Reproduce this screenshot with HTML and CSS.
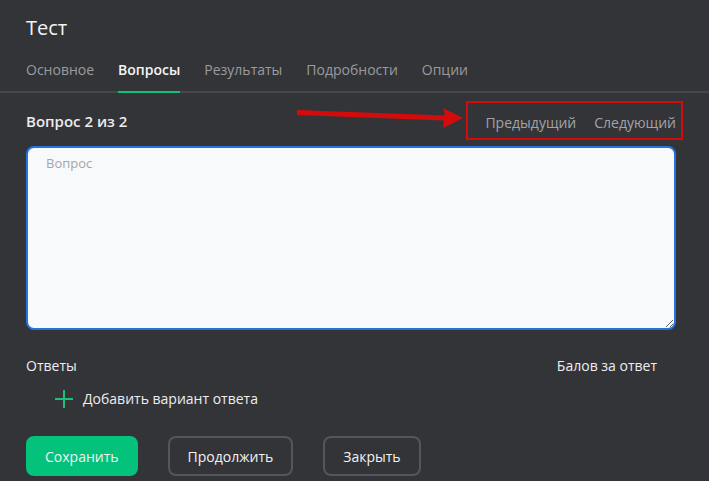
FILE: index.html
```html
<!DOCTYPE html>
<html lang="ru">
<head>
    <meta charset="UTF-8">
    <title>Тест</title>
    <link rel="stylesheet" href="styles.css">
</head>
<body>

<div class="dialog">
    <!-- Header -->
    <h1 class="title">Тест</h1>
    <div class="tabs">
        <span class="tab">Основное</span>
        <span class="tab active">Вопросы</span>
        <span class="tab">Результаты</span>
        <span class="tab">Подробности</span>
        <span class="tab">Опции</span>
    </div>

    <!-- Question -->
    <div class="question-head">
        <span class="question-num">Вопрос 2 из 2</span>
        <div class="nav">
            <svg class="arrow" width="170" height="24" viewBox="0 0 170 24">
                <polygon points="0,3 148,8.5 146,1 166,11 146,21 147,13.5 0,8" fill="#d40b0b"/>
            </svg>
            <div class="nav-box">
                <span>Предыдущий</span>
                <span>Следующий</span>
            </div>
        </div>
    </div>
    <textarea class="question-text" placeholder="Вопрос" autofocus></textarea>

    <!-- Answers -->
    <div class="answers-head">
        <span>Ответы</span>
        <span>Балов за ответ</span>
    </div>
    <div class="add-answer">
        <svg width="18" height="18" viewBox="0 0 18 18">
            <path d="M9 0v18M0 9h18" stroke="#1cc07a" stroke-width="2"/>
        </svg>
        <span>Добавить вариант ответа</span>
    </div>

    <!-- Buttons -->
    <div class="buttons">
        <button class="btn btn-primary">Сохранить</button>
        <button class="btn">Продолжить</button>
        <button class="btn">Закрыть</button>
    </div>
</div>

</body>
</html>
```

FILE: styles.css
```css
/* Global Styles */
body {
    font-family: 'Open Sans', 'Noto Sans', sans-serif;
    background-color: #333438;
    margin: 0;
    padding: 0;
    color: #e6e6e8;
}
.dialog {
    padding: 14px 0 0;
}

/* Header */
.title {
    font-size: 20px;
    font-weight: 400;
    color: #f2f2f2;
    margin: 0 26px;
    line-height: 28px;
}
.tabs {
    display: flex;
    gap: 24px;
    padding: 0 26px;
    margin-top: 18px;
    border-bottom: 2px solid #46474b;
}
.tab {
    font-size: 14px;
    color: #9a9b9f;
    line-height: 20px;
    padding-bottom: 11px;
    margin-bottom: -2px;
    border-bottom: 2px solid transparent;
}
.tab.active {
    color: #f4f4f4;
    font-weight: 600;
    border-bottom-color: #12c27b;
}

/* Question */
.question-head {
    display: flex;
    justify-content: space-between;
    align-items: center;
    padding: 0 26px;
    margin-top: 8px;
    height: 39px;
}
.question-num {
    font-size: 15px;
    font-weight: 600;
    color: #ececee;
    margin-top: 1px;
}
.nav {
    display: flex;
    align-items: center;
}
.arrow {
    margin-right: -1px;
    margin-top: -4px;
}
.nav-box {
    display: flex;
    gap: 18px;
    border: 2px solid #d40b0b;
    padding: 10px 5px 0 17px;
    height: 25px;
    font-size: 14px;
    color: #a2a3a7;
}
.question-text {
    display: block;
    box-sizing: border-box;
    width: 650px;
    height: 184px;
    margin: 6px 26px 0;
    border: 2px solid #2673dc;
    border-radius: 8px;
    background-color: #f8f9fb;
    padding: 6px 18px;
    font-family: inherit;
    font-size: 13px;
    color: #333;
    outline: none;
    resize: vertical;
}
.question-text::placeholder {
    color: #a4a5a9;
}

/* Answers */
.answers-head {
    display: flex;
    justify-content: space-between;
    padding: 0 52px 0 26px;
    margin-top: 26px;
    font-size: 14px;
    line-height: 20px;
    color: #eeeef0;
}
.add-answer {
    display: flex;
    align-items: center;
    gap: 10px;
    margin: 13px 0 0 55px;
    font-size: 14px;
    color: #eeeef0;
}

/* Buttons */
.buttons {
    display: flex;
    gap: 30px;
    padding: 0 26px;
    margin-top: 28px;
}
.btn {
    font-family: inherit;
    font-size: 14px;
    font-weight: 500;
    color: #f2f2f2;
    background: transparent;
    border: 2px solid #55565b;
    border-radius: 8px;
    height: 40px;
    padding: 0 18px;
}
.btn-primary {
    background-color: #04c27b;
    border-color: #04c27b;
    padding: 0 17px;
}
```
